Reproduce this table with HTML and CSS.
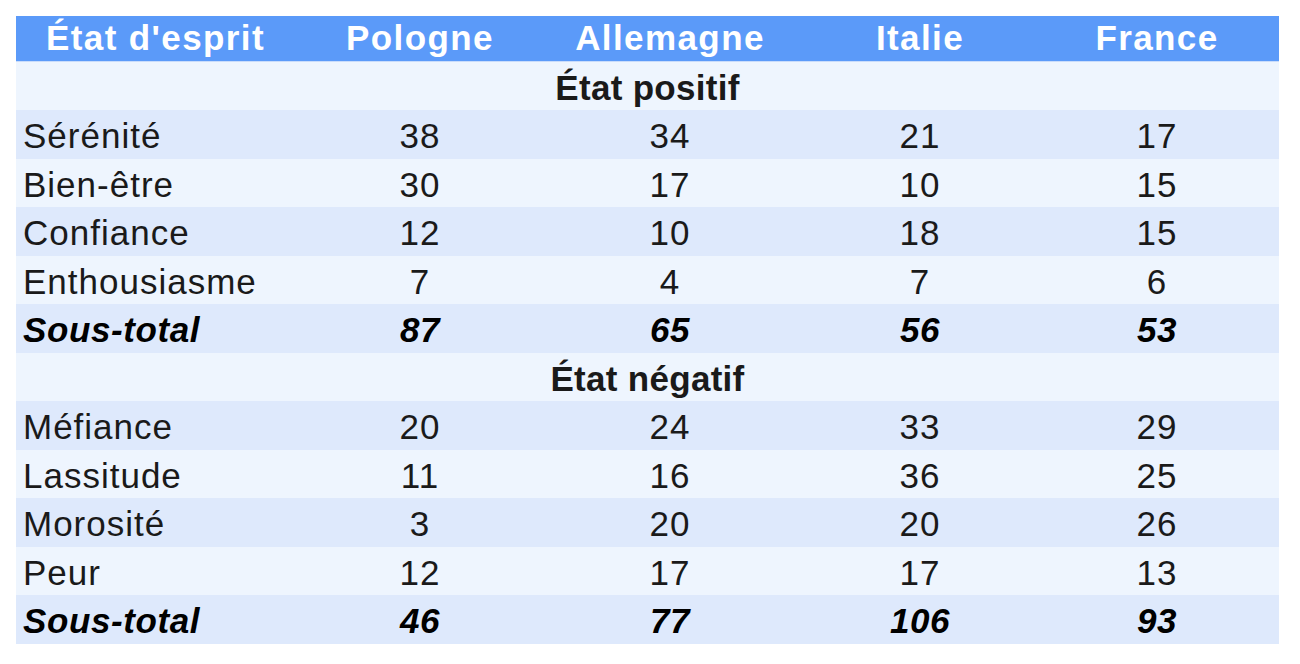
FILE: index.html
```html
<!DOCTYPE html>
<html lang="fr">
<head>
<meta charset="utf-8">
<title>État d'esprit</title>
<link rel="stylesheet" href="styles.css">
</head>
<body>
<table class="data">
  <colgroup>
    <col class="c1"><col class="cn"><col class="cn"><col class="cn"><col class="c5">
  </colgroup>
  <thead>
    <tr>
      <th>État d'esprit</th>
      <th>Pologne</th>
      <th>Allemagne</th>
      <th>Italie</th>
      <th class="last">France</th>
    </tr>
  </thead>
  <tbody>
    <tr class="section"><td colspan="5">État positif</td></tr>
    <tr class="dark"><td>Sérénité</td><td>38</td><td>34</td><td>21</td><td class="last">17</td></tr>
    <tr class="light"><td>Bien-être</td><td>30</td><td>17</td><td>10</td><td class="last">15</td></tr>
    <tr class="dark"><td>Confiance</td><td>12</td><td>10</td><td>18</td><td class="last">15</td></tr>
    <tr class="light"><td>Enthousiasme</td><td>7</td><td>4</td><td>7</td><td class="last">6</td></tr>
    <tr class="dark total"><td>Sous-total</td><td>87</td><td>65</td><td>56</td><td class="last">53</td></tr>
    <tr class="section"><td colspan="5">État négatif</td></tr>
    <tr class="dark"><td>Méfiance</td><td>20</td><td>24</td><td>33</td><td class="last">29</td></tr>
    <tr class="light"><td>Lassitude</td><td>11</td><td>16</td><td>36</td><td class="last">25</td></tr>
    <tr class="dark"><td>Morosité</td><td>3</td><td>20</td><td>20</td><td class="last">26</td></tr>
    <tr class="light"><td>Peur</td><td>12</td><td>17</td><td>17</td><td class="last">13</td></tr>
    <tr class="dark total"><td>Sous-total</td><td>46</td><td>77</td><td>106</td><td class="last">93</td></tr>
  </tbody>
</table>
</body>
</html>
```
FILE: styles.css
```css
html, body {
  margin: 0;
  padding: 0;
  background: #ffffff;
}
body {
  padding: 16px;
  font-family: "Liberation Sans", Arial, sans-serif;
}
.data {
  border-collapse: collapse;
  table-layout: fixed;
  width: 1263px;
  color: #1a1a1a;
}
.c1 { width: 279px; }
.cn { width: 250px; }
.c5 { width: 234px; }

.data th {
  background: #5b9af9;
  color: #ffffff;
  font-size: 35px;
  font-weight: bold;
  letter-spacing: 1.4px;
  line-height: 40px;
  height: 45px;
  padding: 2px 0 3px;
  box-sizing: border-box;
  text-align: center;
  border-bottom: 1px solid #c9dcfb;
}
.data td {
  font-size: 35px;
  letter-spacing: 1px;
  line-height: 40px;
  height: 48.5px;
  box-sizing: border-box;
  padding: 6px 0 2px;
  text-align: center;
  vertical-align: middle;
}
.data td:first-child {
  text-align: left;
  padding-left: 7px;
}
.data .last {
  padding-right: 10px;
}
.section td,
.data .section td:first-child {
  text-align: center;
  font-weight: bold;
  letter-spacing: 0.3px;
  padding-left: 0;
  background: #eef5fe;
}
.dark td { background: #dee9fc; }
.light td { background: #eef5fe; }
.total td {
  font-weight: bold;
  font-style: italic;
  letter-spacing: 0.6px;
  color: #000000;
}
```
